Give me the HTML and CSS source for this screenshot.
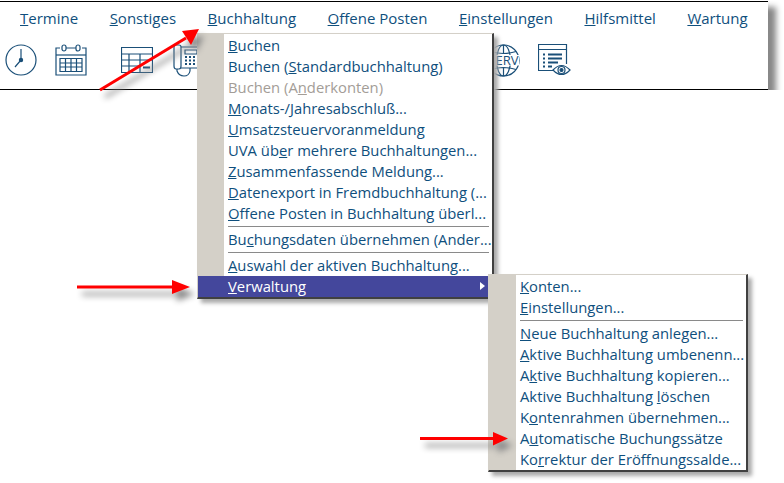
FILE: index.html
```html
<!DOCTYPE html>
<html lang="de">

<head>
    <meta charset="UTF-8">
    <title>Buchhaltung Verwaltung</title>
    <link rel="stylesheet" href="styles.css">
</head>

<body>
    <div id="head">
        <ul class="menubar">
            <li><u>T</u>ermine</li>
            <li><u>S</u>onstiges</li>
            <li><u>B</u>uchhaltung</li>
            <li><u>O</u>ffene Posten</li>
            <li><u>E</u>instellungen</li>
            <li><u>H</u>ilfsmittel</li>
            <li><u>W</u>artung</li>
        </ul>
        <div class="toolbar">
            <!-- Uhr -->
            <svg class="icon i-clock" width="32" height="32" viewBox="0 0 32 32">
                <circle cx="16" cy="16" r="15"/>
                <path d="M16 5V16L10 23"/>
                <circle class="fill" cx="16" cy="16" r="1.6"/>
            </svg>
            <!-- Kalender -->
            <svg class="icon i-cal" width="32" height="32" viewBox="0 0 32 32">
                <path d="M5 4H1V31H31V4H27M11 4H21"/>
                <rect x="7" y="1" width="4" height="6" rx="2"/>
                <rect x="21" y="1" width="4" height="6" rx="2"/>
                <path d="M1 11H31"/>
                <path d="M5 14.500H27V27.500H5ZM5 19H27M5 23H27M10.500 14.500V27.500M16 14.500V27.500M21.500 14.500V27.500"/>
            </svg>
            <!-- Tabelle -->
            <svg class="icon i-table" width="32" height="26" viewBox="0 0 32 26">
                <path d="M.5.500H31.500V25.500H.5ZM.5 7H31.500M.5 13H31.500M.5 19H19M8 7V25.500M19 7V25.500"/>
                <path class="thick" d="M22 20.500H29"/>
            </svg>
            <!-- Telefon -->
            <svg class="icon i-phone" width="24" height="33" viewBox="0 0 24 33">
                <path d="M1 3Q1 1 3 1H6Q8 1 8 3V22Q8 25 6 25H3Q1 25 1 22Z"/>
                <path d="M8 3H24M8 24H24M4 25V27Q6 32 11 32Q16 32 17 27V24"/>
                <path d="M12 6H24V10H12Z"/>
                <path class="thick" d="M12 13H14M16 13H18M20 13H22M12 16.500H14M16 16.500H18M20 16.500H22M12 20H14M16 20H18M20 20H22"/>
            </svg>
            <!-- ERV Globus -->
            <svg class="icon i-globe" width="33" height="33" viewBox="0 0 33 33">
                <circle cx="16.500" cy="16.500" r="15.500"/>
                <ellipse cx="16.500" cy="16.500" rx="7" ry="15.500"/>
                <path d="M16.500 1V9M16.500 24V32M4 7.500Q16.500 11.500 29 7.500M4 25.500Q16.500 21.500 29 25.500"/>
                <rect class="blank" x="1" y="11" width="31" height="10.500"/>
                <text x="20" y="21" text-anchor="middle">ERV</text>
            </svg>
            <!-- Liste mit Auge -->
            <svg class="icon i-view" width="33" height="33" viewBox="0 0 33 33">
                <path d="M16 26.500H.5V.5H28.500V20M.5 5.500H28.500"/>
                <path class="thick" d="M5 10.500H7M10 10.500H24M5 14.500H7M10 14.500H24M5 18.500H7M10 18.500H20M5 22.500H7M10 22.500H14"/>
                <path class="blank" d="M15 26Q23.500 17 32 26Q23.500 35 15 26Z"/>
                <circle cx="23.500" cy="26" r="3.500"/>
                <circle class="fill" cx="23.500" cy="26" r="1.500"/>
            </svg>
        </div>
    </div>

    <ul class="menu menu-main">
        <li><u>B</u>uchen</li>
        <li>Buchen (<u>S</u>tandardbuchhaltung)</li>
        <li class="off">Buchen (A<u>n</u>derkonten)</li>
        <li><u>M</u>onats-/Jahresabschluß...</li>
        <li><u>U</u>msatzsteuervoranmeldung</li>
        <li>UVA üb<u>e</u>r mehrere Buchhaltungen...</li>
        <li><u>Z</u>usammenfassende Meldung...</li>
        <li><u>D</u>atenexport in Fremdbuchhaltung (...</li>
        <li><u>O</u>ffene Posten in Buchhaltung überl...</li>
        <li class="sep"></li>
        <li>Bu<u>c</u>hungsdaten übernehmen (Ander...</li>
        <li class="sep"></li>
        <li><u>A</u>uswahl der aktiven Buchhaltung...</li>
        <li class="now"><u>V</u>erwaltung<span class="more"></span></li>
    </ul>

    <ul class="menu menu-sub">
        <li><u>K</u>onten...</li>
        <li><u>E</u>instellungen...</li>
        <li class="sep"></li>
        <li><u>N</u>eue Buchhaltung anlegen...</li>
        <li><u>A</u>ktive Buchhaltung umbenenn...</li>
        <li>A<u>k</u>tive Buchhaltung kopieren...</li>
        <li>Aktive Buchhaltung <u>l</u>öschen</li>
        <li>K<u>o</u>ntenrahmen übernehmen...</li>
        <li>A<u>u</u>tomatische Buchungssätze</li>
        <li>Ko<u>r</u>rektur der Eröffnungssalde...</li>
    </ul>

    <!-- rote Pfeile -->
    <svg class="arrows" width="784" height="483" viewBox="0 0 784 483">
        <path d="M100 90L186 38" stroke="#f00" stroke-width="3"/>
        <path d="M199 29L182 31L191 45Z" fill="#f00"/>
        <path d="M77 287H174" stroke="#f00" stroke-width="3"/>
        <path d="M190 287L172 280V294Z" fill="#f00"/>
        <path d="M420 438.500H495" stroke="#f00" stroke-width="3"/>
        <path d="M508 438.500L493 432V445.500Z" fill="#f00"/>
    </svg>
</body>

</html>
```

FILE: styles.css
```css
body,
ul,
li {
    margin: 0;
    padding: 0;
}

ul {
    list-style-type: none;
}

body {
    position: relative;
    width: 784px;
    height: 483px;
    overflow: hidden;
    background: #fff;
    font: 14.800px/21px "Open Sans", sans-serif;
    color: #0f4f7d;
}

#head {
    width: 768px;
    height: 87px;
    margin-top: 1px;
    background: #fff;
    border-top: 1px solid #000;
    border-bottom: 1px solid #000;
    box-shadow: 8px 6px 6px #888;
    clip-path: inset(0 -20px 0 0);
}

.menubar {
    display: flex;
    gap: 31.500px;
    padding: 6px 0 0 20px;
    font-size: 15px;
}

.toolbar {
    display: flex;
    align-items: center;
    height: 36px;
    padding: 13px 0 0 5px;
}

.icon {
    flex: none;
    fill: none;
    stroke: #1a4f78;
    stroke-width: 1.200;
}

.icon .fill {
    fill: #1a4f78;
}

.icon .thick {
    stroke-width: 2;
}

.icon .blank {
    fill: #fff;
    stroke: none;
}

.icon text {
    font: 13px "Open Sans", sans-serif;
    fill: #1a4f78;
    stroke: none;
}

.i-cal {
    margin-left: 18px;
}

.i-table {
    margin-left: 34px;
}

.i-phone {
    margin-left: 20px;
}

.i-globe {
    margin-left: 290px;
}

.i-view {
    margin-left: 18px;
}

.i-view .blank {
    stroke: #1a4f78;
}

.menu {
    position: absolute;
    background: linear-gradient(to right, #d4d0c8 26px, #fff 26px);
    border: 1px solid #d4d0c8;
    border-right: 2px solid #404040;
    border-bottom: 2px solid #404040;
    box-shadow: 4px 4px 4px #aaa;
    white-space: nowrap;
}

.menu li {
    height: 21px;
    padding-left: 30px;
}

.menu li.sep {
    height: 1px;
    margin: 2px 3px 2px 30px;
    padding: 0;
    background: #8a8a8a;
}

.menu li.off {
    color: #a39d97;
}

.menu li.now {
    position: relative;
    margin-left: 0;
    background: #44479c;
    color: #fff;
}

.more {
    position: absolute;
    right: 7px;
    top: 6px;
    border-left: 5px solid #fff;
    border-top: 4px solid transparent;
    border-bottom: 4px solid transparent;
}

.menu-main {
    left: 197px;
    top: 33px;
    width: 294px;
    padding: 1px 0 0;
}

.menu-sub {
    left: 488px;
    top: 274px;
    width: 257px;
    padding: 1px 0 0;
    background: linear-gradient(to right, #d4d0c8 27px, #fff 27px);
}

.menu-sub li {
    padding-left: 31px;
}

.menu-sub li.sep {
    margin-left: 31px;
}

.arrows {
    position: absolute;
    left: 0;
    top: 0;
    filter: drop-shadow(5px 7px 3px #888);
    pointer-events: none;
}
```
